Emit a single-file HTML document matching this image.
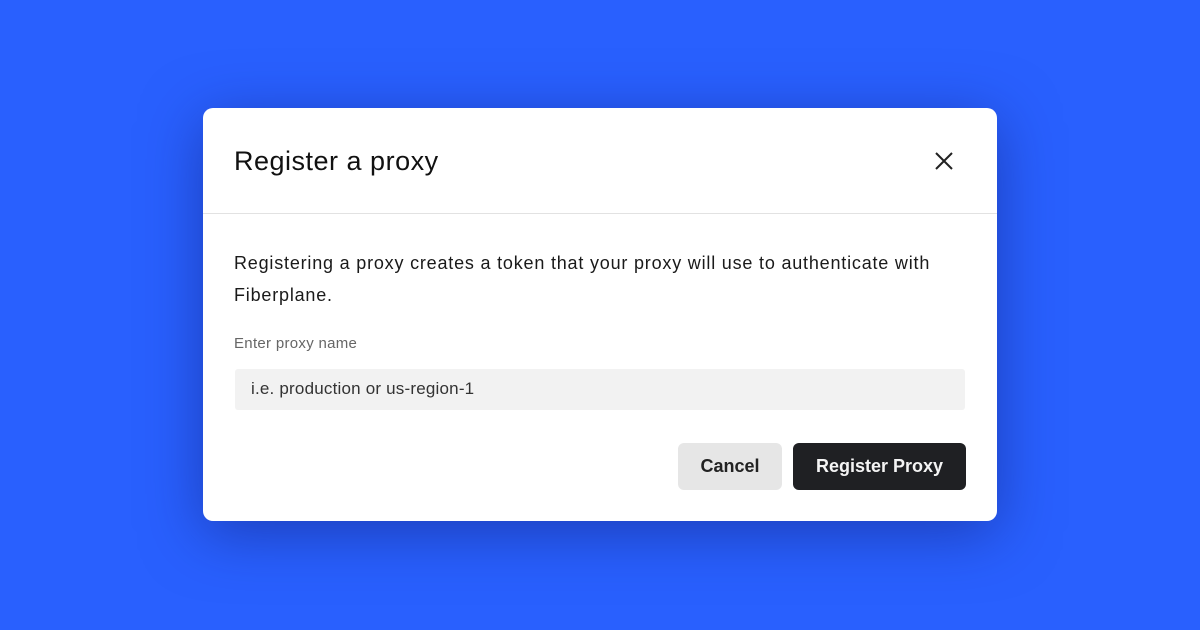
<!DOCTYPE html>
<html><head><style>
*{margin:0;padding:0;box-sizing:border-box}
body{width:1200px;height:630px;background:#2960fe;font-family:"Liberation Sans",sans-serif;position:relative;overflow:hidden}
.d{position:absolute;left:203px;top:108px;width:794px;height:413px;background:#fff;border-radius:10px;box-shadow:0 12px 60px rgba(20,40,140,.6)}
.h{height:106px;border-bottom:1px solid #e2e2e2;position:relative}
.t{position:absolute;left:31px;top:38px;font-size:27px;color:#111;letter-spacing:.5px}
.x{position:absolute;left:732px;top:44px}
.p{position:absolute;left:31px;top:139px;font-size:18px;line-height:32px;color:#1a1a1a;width:740px;letter-spacing:.8px}
.l{position:absolute;left:31px;top:227px;font-size:15px;color:#666;letter-spacing:.3px}
.i{position:absolute;left:32px;top:261px;width:730px;height:41px;background:#f2f2f2;border-radius:3px;font-size:17px;color:#333;padding:10px 16px;letter-spacing:.2px}
.b{position:absolute;top:335px;height:47px;border-radius:6px;font-size:18px;font-weight:bold;display:flex;align-items:center;justify-content:center}
.c{left:475px;width:104px;background:#e6e6e6;color:#222}
.r{left:590px;width:173px;background:#1f2023;color:#f4f4f4}
</style></head><body>
<div class="d">
<div class="h"><div class="t">Register a proxy</div>
<svg class="x" width="18" height="18" viewBox="0 0 18 18"><path d="M1 1L17 17M17 1L1 17" stroke="#222" stroke-width="2"/></svg></div>
<div class="p">Registering a proxy creates a token that your proxy will use to authenticate with Fiberplane.</div>
<div class="l">Enter proxy name</div>
<div class="i">i.e. production or us-region-1</div>
<div class="b c">Cancel</div>
<div class="b r">Register Proxy</div>
</div>
</body></html>
